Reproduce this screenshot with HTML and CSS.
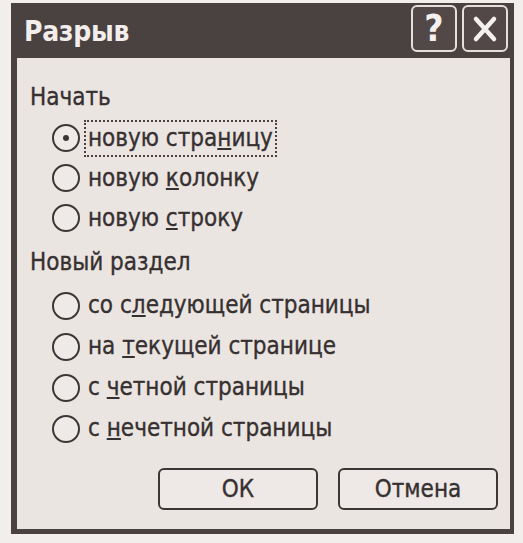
FILE: index.html
```html
<!DOCTYPE html>
<html lang="ru">
<head>
<meta charset="utf-8">
<title>Разрыв</title>
<link rel="stylesheet" href="styles.css">
</head>
<body>
<div class="window">
  <div class="titlebar">
    <span class="title">Разрыв</span>
    <div class="tbuttons">
      <span class="tbtn help">?</span>
      <span class="tbtn close"><svg viewBox="0 0 40 40" width="40" height="40"><path d="M11 10 L29 30 M29 10 L11 30" stroke="#f4f0ee" stroke-width="4.5" stroke-linecap="round"/></svg></span>
    </div>
  </div>
  <div class="content">
    <div class="label">Начать</div>
    <div class="group g1">
      <div class="row"><span class="radio checked"></span><span class="text focus">новую стра<u>н</u>ицу</span></div>
      <div class="row"><span class="radio"></span><span class="text">новую <u>к</u>олонку</span></div>
      <div class="row"><span class="radio"></span><span class="text">новую <u>с</u>троку</span></div>
    </div>
    <div class="label l2">Новый раздел</div>
    <div class="group g2">
      <div class="row"><span class="radio"></span><span class="text">со с<u>л</u>едующей страницы</span></div>
      <div class="row"><span class="radio"></span><span class="text">на <u>т</u>екущей странице</span></div>
      <div class="row"><span class="radio"></span><span class="text">с <u>ч</u>етной страницы</span></div>
      <div class="row"><span class="radio"></span><span class="text">с <u>н</u>ечетной страницы</span></div>
    </div>
    <div class="buttons">
      <span class="btn">ОК</span>
      <span class="btn">Отмена</span>
    </div>
  </div>
</div>
</body>
</html>
```
FILE: styles.css
```css
html, body {
  margin: 0;
  padding: 0;
  background: #f2eeeb;
}
body {
  font-family: "DejaVu Sans Condensed", "DejaVu Sans", sans-serif;
  color: #363030;
}
.window {
  margin: 3px 0 0 11px;
  width: 503px;
  height: 531px;
  box-sizing: border-box;
  background: #4a4141;
  padding: 0 4px 5px 6px;
  display: flex;
  flex-direction: column;
}
.titlebar {
  height: 55px;
  display: flex;
  align-items: center;
  justify-content: space-between;
  flex: none;
}
.title {
  color: #f3eeec;
  font-family: "DejaVu Sans Condensed", "DejaVu Sans", sans-serif;
  font-weight: bold;
  font-size: 28px;
  padding-left: 7px;
  padding-top: 2px;
  letter-spacing: -0.3px;
}
.tbuttons {
  display: flex;
  gap: 5px;
  padding-right: 2px;
  align-self: flex-start;
  padding-top: 2px;
}
.tbtn {
  width: 46px;
  height: 47px;
  box-sizing: border-box;
  border: 2px solid #e6e0dd;
  border-radius: 6px;
  display: flex;
  align-items: center;
  justify-content: center;
  color: #f4f0ee;
  background: #524848;
}
.help {
  font-family: "DejaVu Sans Condensed", "DejaVu Sans", sans-serif;
  font-weight: bold;
  font-size: 37px;
  line-height: 1;
}
.content {
  flex: 1;
  background: #ebe5e2;
  padding: 24px 12px 0 13px;
  font-size: 24px;
  display: flex;
  flex-direction: column;
  -webkit-text-stroke: 0.35px #363030;
}
.label {
  height: 30px;
  line-height: 30px;
}
.l2 {
  margin-top: 9px;
}
.group {
  padding-left: 22px;
}
.g1 {
  margin-top: 6px;
}
.g1 .row { height: 40px; }
.g2 { margin-top: 8px; }
.g2 .row { height: 41px; }
.row {
  display: flex;
  align-items: center;
}
.radio {
  width: 28px;
  height: 28px;
  box-sizing: border-box;
  border: 2.5px solid #3d3636;
  border-radius: 50%;
  background: #eeeae8;
  position: relative;
  flex: none;
}
.radio.checked::after {
  content: "";
  position: absolute;
  left: 50%;
  top: 50%;
  width: 6px;
  height: 6px;
  margin: -3px 0 0 -3px;
  border-radius: 50%;
  background: #3d3636;
}
.text {
  margin-left: 4px;
  padding: 3px 2px 3px 2px;
  border: 2px solid transparent;
  line-height: 27px;
}
.text.focus {
  border: 2px dotted #4a4242;
}
u {
  text-decoration-thickness: 2px;
  text-underline-offset: 2px;
}
.buttons {
  margin-top: 19px;
  display: flex;
  justify-content: flex-end;
  gap: 20px;
}
.btn {
  width: 160px;
  height: 42px;
  box-sizing: border-box;
  border: 2.5px solid #3d3636;
  border-radius: 6px;
  display: flex;
  align-items: center;
  justify-content: center;
  background: #eee9e6;
  font-size: 24px;
}
```
